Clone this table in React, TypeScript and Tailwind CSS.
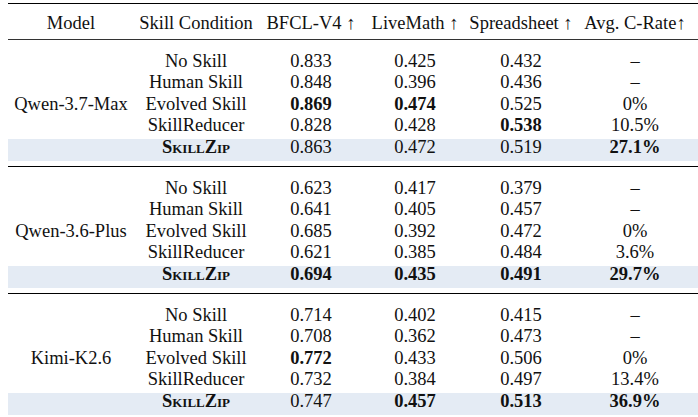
type Cell = { v: string; b?: boolean };

type Group = {
  model: string;
  rows: { cond: string; cells: Cell[] }[];
  zip: Cell[];
};

const groups: Group[] = [
  {
    model: "Qwen-3.7-Max",
    rows: [
      { cond: "No Skill", cells: [{ v: "0.833" }, { v: "0.425" }, { v: "0.432" }, { v: "–" }] },
      { cond: "Human Skill", cells: [{ v: "0.848" }, { v: "0.396" }, { v: "0.436" }, { v: "–" }] },
      { cond: "Evolved Skill", cells: [{ v: "0.869", b: true }, { v: "0.474", b: true }, { v: "0.525" }, { v: "0%" }] },
      { cond: "SkillReducer", cells: [{ v: "0.828" }, { v: "0.428" }, { v: "0.538", b: true }, { v: "10.5%" }] },
    ],
    zip: [{ v: "0.863" }, { v: "0.472" }, { v: "0.519" }, { v: "27.1%", b: true }],
  },
  {
    model: "Qwen-3.6-Plus",
    rows: [
      { cond: "No Skill", cells: [{ v: "0.623" }, { v: "0.417" }, { v: "0.379" }, { v: "–" }] },
      { cond: "Human Skill", cells: [{ v: "0.641" }, { v: "0.405" }, { v: "0.457" }, { v: "–" }] },
      { cond: "Evolved Skill", cells: [{ v: "0.685" }, { v: "0.392" }, { v: "0.472" }, { v: "0%" }] },
      { cond: "SkillReducer", cells: [{ v: "0.621" }, { v: "0.385" }, { v: "0.484" }, { v: "3.6%" }] },
    ],
    zip: [{ v: "0.694", b: true }, { v: "0.435", b: true }, { v: "0.491", b: true }, { v: "29.7%", b: true }],
  },
  {
    model: "Kimi-K2.6",
    rows: [
      { cond: "No Skill", cells: [{ v: "0.714" }, { v: "0.402" }, { v: "0.415" }, { v: "–" }] },
      { cond: "Human Skill", cells: [{ v: "0.708" }, { v: "0.362" }, { v: "0.473" }, { v: "–" }] },
      { cond: "Evolved Skill", cells: [{ v: "0.772", b: true }, { v: "0.433" }, { v: "0.506" }, { v: "0%" }] },
      { cond: "SkillReducer", cells: [{ v: "0.732" }, { v: "0.384" }, { v: "0.497" }, { v: "13.4%" }] },
    ],
    zip: [{ v: "0.747" }, { v: "0.457", b: true }, { v: "0.513", b: true }, { v: "36.9%", b: true }],
  },
];

const cols = "grid grid-cols-[126px_124px_106px_102px_110px_118px] text-center";

const Vals = ({ cells }: { cells: Cell[] }) => (
  <>
    {cells.map((c, i) => (
      <div key={i} className={c.b ? "font-bold" : ""}>
        {c.v}
      </div>
    ))}
  </>
);

export default function App() {
  return (
    <div
      className="w-[698px] h-[417px] bg-white pt-[3px] pl-[8px] text-[18.5px] leading-[16px] text-[#111] overflow-hidden"
      style={{ fontFamily: '"Liberation Serif", "Times New Roman", serif' }}
    >
      {/* header */}
      <div className={`${cols} h-[37px] pt-[11px] border-t-[1.5px] border-b border-t-black border-b-[#333]`}>
        <div>Model</div>
        <div>Skill Condition</div>
        <div>BFCL-V4 ↑</div>
        <div>LiveMath ↑</div>
        <div>Spreadsheet ↑</div>
        <div>Avg. C-Rate↑</div>
      </div>

      {groups.map((g, gi) => (
        <div
          key={g.model}
          className={`pt-[12.5px] ${gi < groups.length - 1 ? "pb-[5px] border-b-[1.3px] border-black" : ""}`}
        >
          {g.rows.map((r, ri) => (
            <div key={r.cond} className={`${cols} h-[21.5px]`}>
              <div>{ri === 2 ? g.model : ""}</div>
              <div>{r.cond}</div>
              <Vals cells={r.cells} />
            </div>
          ))}
          <div className={`${cols} h-[22.5px] bg-[#e4ebf4]`}>
            <div />
            <div className="font-bold [font-variant-caps:small-caps]">SkillZip</div>
            <Vals cells={g.zip} />
          </div>
        </div>
      ))}
    </div>
  );
}
